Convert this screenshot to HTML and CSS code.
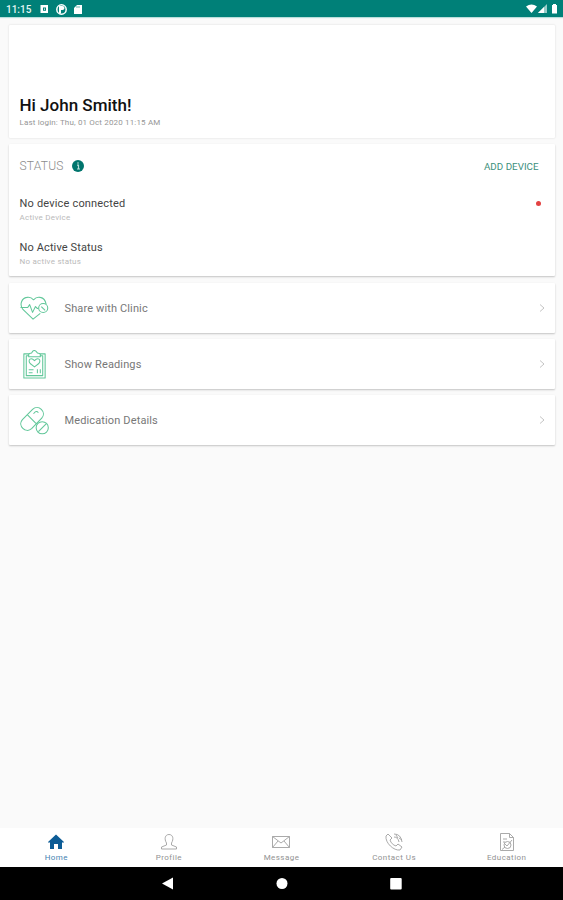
FILE: index.html
```html
<!DOCTYPE html>
<html lang="en">
<head>
<meta charset="utf-8">
<title>Home</title>
<link rel="stylesheet" href="styles.css">
</head>
<body>
<header class="statusbar">
  <span class="clock">11:15</span>
  <svg class="notices" width="42" height="12" viewBox="0 0 42 12">
    <path fill="#fff" fill-rule="evenodd" d="M.5 1H8v8H.5zM3 3.400v3.400h3V3.400z"/><path fill="#fff" d="M4 4.400h1v1.400H4z"/>
    <circle cx="21.500" cy="5.500" r="4.700" fill="none" stroke="#fff" stroke-width="1.500"/><path d="M19 2h3.500a2 2 0 0 1 0 4H21v3.500h-2z" fill="#fff"/>
    <path d="M37 1h5v9h-8V4z" fill="#fff"/><path d="M37 2v2M39 2v2" stroke="#008577" stroke-width=".6"/>
  </svg>
  <svg class="signals" width="32" height="10" viewBox="0 0 32 10">
    <path d="M0 2.500Q5.500-1.700 11 2.500L5.500 9z" fill="#fff"/><path d="M21 0v9h-9z" fill="#fff" opacity=".6"/><path d="M18 3v6h-6z" fill="#fff"/><path d="M26 1h1V0h3v1h1v8.500h-5V1z" fill="#fff"/>
  </svg>
</header>
<main class="content">
  <section class="card welcome">
    <h1>Hi John Smith!</h1>
    <p class="login">Last login: Thu, 01 Oct 2020 11:15 AM</p>
  </section>
  <section class="card status">
    <div class="status-head">
      <span class="status-title">STATUS</span>
      <svg width="12" height="12" viewBox="0 0 12 12"><circle cx="6" cy="6" r="6" fill="#00756d"/><path d="M5 5.200h1.500v4M5 9h3M6 2.300v1.500" stroke="#b5ddd7" stroke-width="1.200" fill="none"/></svg>
      <span class="add">ADD DEVICE</span>
    </div>
    <div class="entry"><div><p class="name device">No device connected</p><p class="sub">Active Device</p></div><span class="dot"></span></div>
    <div class="entry"><div><p class="name">No Active Status</p><p class="sub">No active status</p></div></div>
  </section>
  <section class="card row">
    <svg class="icon" viewBox="0 0 30 30"><path d="M21 20 13.500 26 3 16C-1 11 2 4 7 3.500q4-1 7 2.500 3-3.500 7-2.500 5 1 6 7M.5 14H8l2-3 3 8 3-6 2 2h1"/><circle cx="24" cy="14.500" r="4.700"/><path d="m22 13 4 4"/></svg>
    <span class="label">Share with Clinic</span>
    <svg class="chevron" viewBox="0 0 6 8"><path d="m1 .5 4 3.500-4 3.500"/></svg>
  </section>
  <section class="card row">
    <svg class="icon" viewBox="0 0 30 30"><path d="M10 4H4v25h22V4h-6M9 6H6.500v20.500h17V6H21M9 7V4l3-1q2.500-5 6 0l3 1v3zM15 17.500 10.500 14c-3-4 1-7 4.500-3 3.500-4 7.500-1 4.500 3zM9 20.500h5M9 23.500h4M18 20v4M21 20v4"/></svg>
    <span class="label">Show Readings</span>
    <svg class="chevron" viewBox="0 0 6 8"><path d="m1 .5 4 3.500-4 3.500"/></svg>
  </section>
  <section class="card row">
    <svg class="icon" viewBox="0 0 30 30"><path d="M2.500 14 13 3.500c6-6 15 3 9.500 9L12 23.500C6 29-3 20 2.500 14zM7.500 9l9.500 9.500M14 8q3-4 5-1"/><circle cx="23" cy="22.500" r="6.300"/><path d="m19 26.500 8-8"/></svg>
    <span class="label">Medication Details</span>
    <svg class="chevron" viewBox="0 0 6 8"><path d="m1 .5 4 3.500-4 3.500"/></svg>
  </section>
</main>
<nav class="tabs">
  <div class="tab selected"><svg viewBox="0 0 18 18"><path d="M1 9 9 1.500 17 9l-1 1-1-1v7h-4v-5H7v5H3V9l-1 1z" fill="#0c5c96" stroke="none"/></svg><span>Home</span></div>
  <div class="tab"><svg viewBox="0 0 18 18"><path d="M6.500 10C4 6 5 1.500 9 1.500S14 6 11.500 10v2l5 2v2h-15v-2l5-2z"/></svg><span>Profile</span></div>
  <div class="tab"><svg viewBox="0 0 18 18"><path d="M.5 3.500h17v11H.5zM.5 3.500 9 10l8.500-6.500M.5 14.500 6 8M17.500 14.500 12 8"/></svg><span>Message</span></div>
  <div class="tab"><svg viewBox="0 0 18 18"><path d="m1 3 2-2 4 4-2 2c1 3 3 5 6 6l2-2 4 3-2 3C9 18 0 10 1 3zM9 1q7 0 8 8M9 4q4 0 5 5M11 2l2 3M14 5l3 2"/></svg><span>Contact Us</span></div>
  <div class="tab"><svg viewBox="0 0 18 18"><path d="M2.500.5h9l4 4v13h-13zM11.500.5v4h4M5 6h4M5 9h2"/><circle cx="9.500" cy="12" r="3.500"/><path d="m7 11 2 2 5-6M4 16.500 7 14"/></svg><span>Education</span></div>
</nav>
<footer class="system">
  <svg width="12" height="13" viewBox="0 0 12 13"><path d="M0 6.500 11 .5v12z"/></svg>
  <svg width="12" height="13" viewBox="0 0 12 13"><circle cx="6" cy="6.500" r="5.500"/></svg>
  <svg width="12" height="13" viewBox="0 0 12 13"><rect x=".2" y="1" width="11.500" height="11.500" rx="1"/></svg>
</footer>
</body>
</html>
```
FILE: styles.css
```css
* { box-sizing: border-box; }
body { margin: 0; height: 900px; display: flex; flex-direction: column; overflow: hidden; background: #fafafa; font-family: Roboto, sans-serif; }
h1, p { margin: 0; }
span, p, h1 { white-space: nowrap; }
.statusbar { height: 17px; flex: none; display: flex; align-items: center; padding: 1px 5px 0 6px; background: #008078; box-shadow: 0 1px 1px #b9dedb; }
.clock { width: 34px; color: #e5f5f3; font-size: 10px; font-weight: 500; }
.notices { margin-top: 1px; }
.signals { margin-left: auto; }
.content { flex: 1; padding: 8px 8px 0 9px; display: flex; flex-direction: column; gap: 6px; }
.card { background: #fff; border-radius: 1px; box-shadow: 0 1px 2px rgba(0,0,0,.22); }
.welcome { height: 113px; padding: 70px 10.500px 0; box-shadow: 0 0 2px rgba(0,0,0,.16); }
h1 { font-size: 17px; line-height: 21px; font-weight: 500; color: #111; }
.login { padding-top: 1px; font-size: 8px; line-height: 12px; letter-spacing: .16px; color: #969696; }
.status { height: 132px; padding: 15px 10.500px 0; }
.status-head { height: 13px; display: flex; align-items: center; }
.status-title { width: 52.500px; font-size: 12px; font-weight: 300; letter-spacing: .25px; color: #8b8b8b; }
.add { margin-left: auto; margin-right: 6px; padding-top: 2px; color: #3c8f7b; font-size: 9.800px; }
.entry { height: 44px; display: flex; justify-content: space-between; }
.status-head + .entry { margin-top: 24px; }
.name { font-size: 11px; line-height: 16px; letter-spacing: .12px; color: #444; }
.device { letter-spacing: .18px; }
.sub { padding-top: 1px; font-size: 8px; line-height: 10px; letter-spacing: .25px; color: #bababa; }
.dot { width: 5px; height: 5px; margin: 5px 4px 0; border-radius: 50%; background: #e34242; }
.row { height: 50px; padding: 1px 10.500px 0; display: flex; align-items: center; }
.status + .row { margin-top: 1px; }
.icon { width: 29px; height: 29px; margin-right: 16px; fill: none; stroke: #62c79a; stroke-width: 1.1; stroke-linejoin: round; }
.label { font-size: 11px; letter-spacing: .13px; color: #777; }
.chevron { width: 6px; height: 8px; margin-left: auto; margin-bottom: 1px; fill: none; stroke: #b5b5b5; stroke-width: .8; }
.tabs { height: 39px; flex: none; display: grid; grid-template-columns: repeat(5, 1fr); background: #fff; }
.tab { display: flex; flex-direction: column; align-items: center; padding-top: 5px; color: #929292; }
.tab svg { width: 18px; height: 18px; fill: none; stroke: #a0a0a0; stroke-width: .9; }
.tab span { padding-top: 1px; font-size: 8px; line-height: 11px; letter-spacing: .45px; }
.tab.selected { color: #4583b2; }
.system { height: 33px; flex: none; display: flex; justify-content: center; align-items: center; gap: 102px; background: #000; }
.system svg { fill: #fff; }
```
